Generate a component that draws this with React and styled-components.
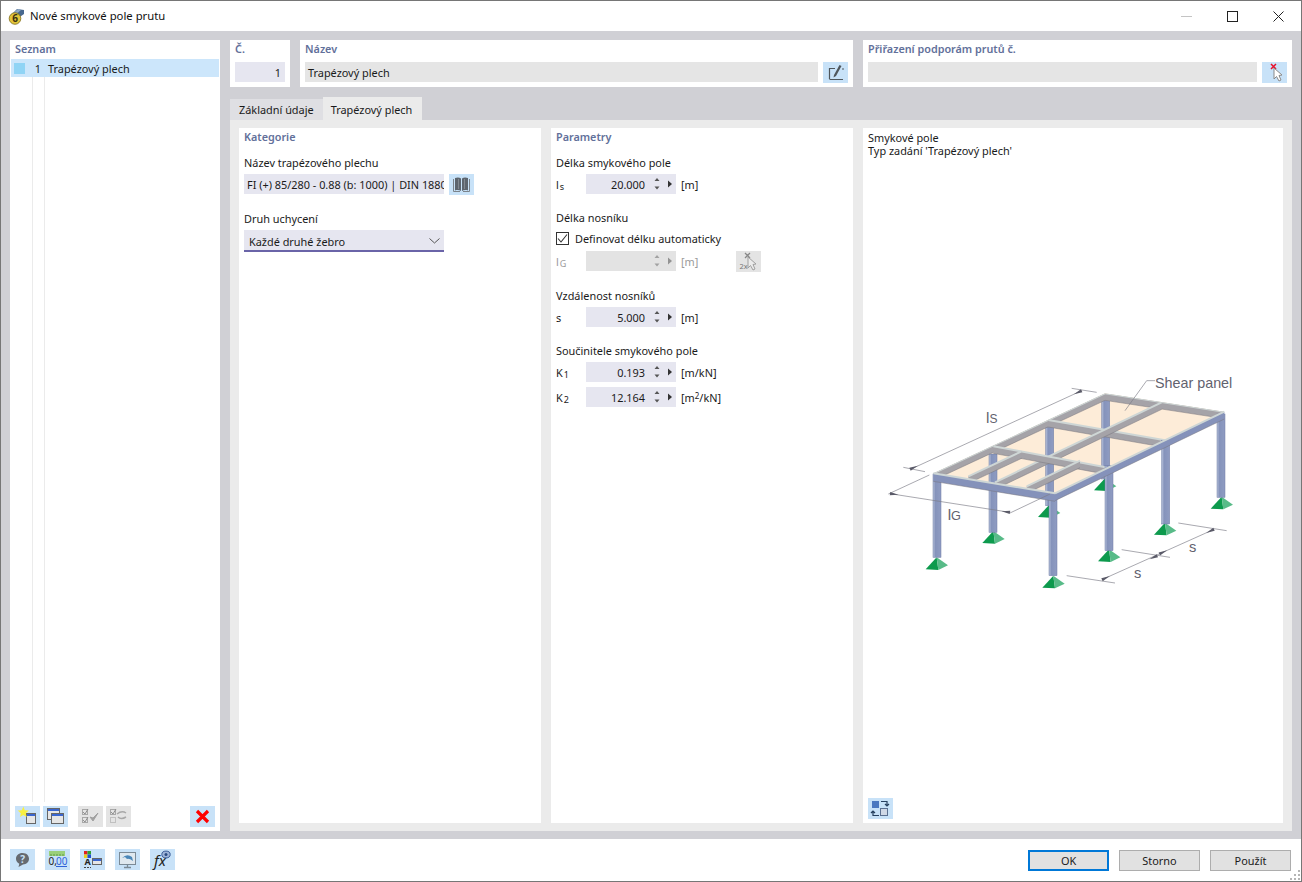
import React from "react";
import styled, { createGlobalStyle } from "styled-components";

const FONT = `"Noto Sans", "Open Sans", "Liberation Sans", sans-serif`;

const Spin = ({ disabled }) => (
  <SpinBox width="26" height="20" viewBox="0 0 26 20" $disabled={disabled}>
    <path d="M4.500 7 L7 4 L9.500 7 Z M4.500 12.500 L7 15.500 L9.500 12.500 Z" fill="#555" />
    <path d="M18 6.500 L22 10 L18 13.500 Z" fill="#333" />
  </SpinBox>
);

const NumberRow = ({ label, sub, value, unit, disabled, children }) => (
  <Row>
    <RowLabel $disabled={disabled}>
      {label}
      {sub && <Sub>{sub}</Sub>}
    </RowLabel>
    <NumberField $disabled={disabled}>
      <NumberValue>{value}</NumberValue>
      <Spin disabled={disabled} />
    </NumberField>
    <Unit $disabled={disabled}>{unit}</Unit>
    {children}
  </Row>
);

const Win = ({ x, y, w = 10, h = 10 }) => (
  <>
    <rect x={x + 0.5} y={y + 0.5} width={w} height={h} fill="#e6e6e6" stroke="#666" />
    <rect x={x + 1} y={y + 1} width={w - 1} height="2" fill="#3a66d0" />
  </>
);

const Ico = ({ children }) => (
  <svg width="25" height="21" viewBox="0 0 25 21">
    {children}
  </svg>
);

const NewIcon = () => (
  <Ico>
    <Win x={11} y={7} w={9} h={10} />
    <path d="M8.300 0.500 L9.800 4.200 L13.800 4.600 L10.800 7.200 L11.700 11 L8.300 9 L5 11 L5.800 7.200 L2.800 4.600 L6.800 4.200 Z" fill="#f8f040" />
  </Ico>
);

const CopyIcon = () => (
  <Ico>
    <Win x={4} y={2} w={12} h={11} />
    <Win x={8} y={7} w={12} h={10} />
  </Ico>
);

const CheckAllIcon = () => (
  <Ico>
    <rect x="4.500" y="3.500" width="5" height="5" fill="none" stroke="#a8a8a8" />
    <rect x="4.500" y="11.500" width="5" height="5" fill="none" stroke="#a8a8a8" />
    <path d="M5 6 L7 8 L10 3 M5 14 L7 16 L10 11" fill="none" stroke="#8f8f8f" />
    <path d="M12 11 L15 15 L20 7 L15 12 Z" fill="#a0a0a0" stroke="#a0a0a0" />
  </Ico>
);

const CheckSwapIcon = () => (
  <Ico>
    <rect x="4.500" y="3.500" width="5" height="5" fill="none" stroke="#a8a8a8" />
    <rect x="4.500" y="11.500" width="5" height="5" fill="none" stroke="#c0c0c0" />
    <path d="M5 6 L7 8 L10 3" fill="none" stroke="#8f8f8f" />
    <path d="M11 8 Q16 4 20 7 M20 11 Q15 14 12 11" fill="none" stroke="#a8a8a8" strokeWidth="1.500" />
  </Ico>
);

const DeleteIcon = () => (
  <Ico>
    <path d="M7 5 L18 16 M18 5 L7 16" stroke="#f00" strokeWidth="3.200" />
  </Ico>
);

const HelpIcon = () => (
  <Ico>
    <path d="M12.500 4 C17 4 19 7 19 9.800 C19 13 16.500 15.500 13 15.500 L8.500 18 L9.300 14.800 C7 13.500 6 12 6 9.800 C6 6.500 8.500 4 12.500 4 Z" fill="#666a70" />
    <IconText x="12.700" y="13.500" fontSize="10" fill="#c8e2f8" textAnchor="middle" fontWeight="700">?</IconText>
  </Ico>
);

const UnitsIcon = () => (
  <Ico>
    <rect x="4" y="2" width="16" height="5" fill="#9ad07a" />
    <path d="M6 5 V7 M9 5 V7 M12 5 V7 M15 5 V7 M18 5 V7" stroke="#5e9a48" />
    <IconText x="3.500" y="16" fontSize="10" fill="#222">0,</IconText>
    <IconText x="11" y="16" fontSize="10" fill="#2f62d8">00</IconText>
    <path d="M11 17.500 H22" stroke="#2f62d8" />
  </Ico>
);

const ColorIcon = () => (
  <Ico>
    <rect x="4" y="2" width="3.500" height="3.500" fill="#e02020" />
    <rect x="7.500" y="2" width="3.500" height="3.500" fill="#30a030" />
    <rect x="4" y="5.500" width="3.500" height="3.500" fill="#e8d020" />
    <rect x="7.500" y="5.500" width="3.500" height="3.500" fill="#2050d0" />
    <IconText x="4.500" y="16" fontSize="9" fontWeight="700" fill="#222">A</IconText>
    <path d="M4 18.500 H11" stroke="#444" strokeDasharray="2 1" />
    <Win x={12} y={9} w={9} h={6} />
  </Ico>
);

const ScreenIcon = () => (
  <Ico>
    <rect x="4.500" y="3.500" width="16" height="12" fill="#dfe8ef" stroke="#7b8a96" />
    <path d="M7 9 Q12 4 17 8 L18 12 Q14 9 12 10 L10 8 Z" fill="#4a86b8" />
    <path d="M12.500 15.500 V18 M9 18.500 H16" stroke="#7b8a96" strokeWidth="1.300" />
  </Ico>
);

const FormulaIcon = () => (
  <Ico>
    <IconText x="4" y="17" fontSize="15" fontStyle="italic" fontFamily='"Liberation Serif", serif' fill="#222">fx</IconText>
    <ellipse cx="16" cy="5.500" rx="4.200" ry="3.400" fill="#9db3d8" stroke="#3d5f9a" />
    <circle cx="16" cy="5.500" r="1.500" fill="#2a4a80" />
  </Ico>
);

const BookIcon = () => (
  <Ico>
    <path d="M6 4 C8 3.200 10.500 3.200 12 4.500 V17 C10.500 15.800 8 15.800 6 16.500 Z" fill="#5d656e" />
    <path d="M13 4.500 C14.500 3.200 17 3.200 19 4 V16.500 C17 15.800 14.500 15.800 13 17 Z" fill="#5d656e" />
    <path d="M4.500 5 V17.500 H11 M20.500 5 V17.500 H14" fill="none" stroke="#7c848c" />
    <path d="M9.500 5 V15 M15.500 5 V15" stroke="#8b939b" strokeWidth="0.800" />
  </Ico>
);

const EditIcon = () => (
  <Ico>
    <path d="M12 6.500 H6.500 V17 M6.500 17.500 H20" fill="none" stroke="#4f565c" strokeWidth="1.200" />
    <path d="M16.500 3 L18.500 4 L13 14 L10.500 15.500 L11 13 Z" fill="#4f565c" />
    <path d="M19 7 H21" stroke="#4f565c" />
  </Ico>
);

const PickXIcon = () => (
  <Ico>
    <path d="M9 2 L14 7 M14 2 L9 7" stroke="#e8102a" strokeWidth="1.500" />
    <path d="M12 6 L12 17 L14.500 14.500 L17 19 L19 18 L17 13.500 L20 13 Z" fill="#fff" stroke="#8a8a8a" />
  </Ico>
);

const PickDisabledIcon = () => (
  <Ico>
    <path d="M9 2 L14 7 M14 2 L9 7" stroke="#888" strokeWidth="1.300" />
    <IconText x="3.500" y="18" fontSize="7.500" fill="#777">2x</IconText>
    <path d="M12 6 L12 17 L14.500 14.500 L17 19 L19 18 L17 13.500 L20 13 Z" fill="#ececec" stroke="#a0a0a0" />
  </Ico>
);

const SwapIcon = () => (
  <Ico>
    <rect x="4" y="3" width="7" height="7" fill="#4a78c0" />
    <rect x="12.500" y="10.500" width="7" height="7" fill="#cfd8e6" stroke="#5a6f90" />
    <path d="M13 3.500 H19 V8 M17 6 L19 8 L21 6 M11 17.500 H5 V13 M3 15 L5 13 L7 15" fill="none" stroke="#26405f" strokeWidth="1.200" />
  </Ico>
);

// diagram, coordinates are 3x page pixels
const OUTLINE = "190,343 705,103 1063,158 555,403";
const backColumns = [
  [695, 125, 360],
  [527, 205, 440],
  [357, 285, 520],
];
const frontColumns = [
  [189, 345, 595],
  [875, 245, 495],
  [705, 320, 575],
  [1041, 165, 415],
  [537, 403, 650],
];
const supports = {
  back: [
    [705, 358],
    [537, 438],
    [370, 516],
  ],
  front: [
    [200, 595],
    [885, 491],
    [717, 571],
    [1055, 413],
    [550, 650],
  ],
};
const innerBeams = [
  [190, 343, 705, 103],
  [705, 103, 1063, 158],
  [535, 183, 885, 244],
  [875, 130, 375, 370],
  [370, 262, 715, 326],
  [455, 277, 295, 352],
  [630, 305, 470, 382],
];

const Support = ({ x, y }) => (
  <g>
    <path d={`M${x} ${y} L${x - 33} ${y + 36} L${x + 5} ${y + 38} Z`} fill="#0d9a4e" />
    <path d={`M${x} ${y} L${x + 5} ${y + 38} L${x + 34} ${y + 24} Z`} fill="#58bb88" />
  </g>
);

const SteelColumn = ({ x, top, bottom, w = 24 }) => (
  <rect x={x} y={top} width={w} height={bottom - top} fill="url(#col)" stroke="#6d7ba4" strokeWidth="1.500" />
);

const Beam = ({ x1, y1, x2, y2, t = 21, fill = "#a5a3a8", line = "#ced6d5" }) => (
  <g>
    <polygon points={`${x1},${y1} ${x2},${y2} ${x2},${y2 + t} ${x1},${y1 + t}`} fill={fill} />
    <line x1={x1} y1={y1} x2={x2} y2={y2} stroke={line} strokeWidth="6" />
    <line x1={x1} y1={y1 + t} x2={x2} y2={y2 + t} stroke="#77757c" strokeWidth="1.500" />
  </g>
);

const DimLine = ({ d }) => <path d={d} fill="none" stroke="#7d7d88" strokeWidth="2" />;

const Arrow = ({ x, y, angle }) => (
  <path d="M-26 0 L0 -5 L0 5 Z" fill="#5a5a68" transform={`translate(${x} ${y}) rotate(${angle})`} />
);

const ShearDiagram = () => (
  <Diagram width="380" height="240" viewBox="0 0 1140 720">
    <defs>
      <linearGradient id="col" x1="0" x2="1" y1="0" y2="0">
        <stop offset="0" stopColor="#b8c2db" />
        <stop offset="0.3" stopColor="#8593bb" />
        <stop offset="1" stopColor="#8f9cc2" />
      </linearGradient>
      <clipPath id="roof">
        <polygon points={OUTLINE} />
      </clipPath>
      <filter id="soft" x="-2%" y="-2%" width="104%" height="104%">
        <feGaussianBlur stdDeviation="1" />
      </filter>
    </defs>
    <g filter="url(#soft)">
      {supports.back.map(([x, y]) => (
        <Support key={x} x={x} y={y} />
      ))}
      <polygon points={OUTLINE} fill="#fdecd8" />
      {backColumns.map(([x, top, bottom]) => (
        <SteelColumn key={x} x={x} top={top} bottom={bottom} />
      ))}
      <g clipPath="url(#roof)">
        {innerBeams.map(([x1, y1, x2, y2]) => (
          <Beam key={`${x1}-${y1}`} x1={x1} y1={y1} x2={x2} y2={y2} />
        ))}
      </g>
      {supports.front.map(([x, y]) => (
        <Support key={x} x={x} y={y} />
      ))}
      {frontColumns.map(([x, top, bottom]) => (
        <SteelColumn key={x} x={x} top={top} bottom={bottom} />
      ))}
      <Beam x1={555} y1={403} x2={1063} y2={158} t={22} fill="#8592ba" />
      <Beam x1={190} y1={343} x2={555} y2={403} t={24} fill="#8592ba" />
      <DimLine d="M130 327 L635 95 M100 325 L165 338 M605 88 L680 100" />
      <DimLine d="M60 404 L420 460 M55 405 L178 348 M420 462 L540 405" />
      <DimLine d="M700 660 L1030 512 M590 650 L735 672 M755 572 L900 595 M925 492 L1070 515" />
      <DimLine d="M855 65 L830 65 L765 155" />
      <Arrow x={120} y={331} angle={155} />
      <Arrow x={635} y={95} angle={-25} />
      <Arrow x={60} y={404} angle={188} />
      <Arrow x={420} y={460} angle={8} />
      <Arrow x={696} y={662} angle={155} />
      <Arrow x={862} y={590} angle={-25} />
      <Arrow x={868} y={585} angle={155} />
      <Arrow x={1032} y={511} angle={-25} />
    </g>
    <DiagramText x="855" y="86" fontSize="43">Shear panel</DiagramText>
    <DiagramText x="348" y="193" fontSize="46">l<tspan fontSize="36">S</tspan></DiagramText>
    <DiagramText x="233" y="482" fontSize="46">l<tspan fontSize="38">G</tspan></DiagramText>
    <DiagramText x="792" y="658" fontSize="44">s</DiagramText>
    <DiagramText x="957" y="580" fontSize="44">s</DiagramText>
  </Diagram>
);

const App = () => {
  return (
    <>
      <GlobalStyle />
      <Window>
        <TitleBar>
          <svg width="18" height="18" viewBox="0 0 18 18">
            <path d="M2 9 L9 2 L16 3 L16 7 L6 14 Z" fill="#48688f" />
            <path d="M3 8 L10 2 L13 3 L6 9 Z" fill="#8fa9c4" />
            <circle cx="7" cy="11.500" r="5.800" fill="#e2c53a" stroke="#7c6a18" strokeWidth="0.800" />
            <TitleDigit x="7" y="15" textAnchor="middle">6</TitleDigit>
          </svg>
          <TitleText>Nové smykové pole prutu</TitleText>
          <WindowControls>
            <WinButton>
              <svg width="11" height="11" viewBox="0 0 11 11">
                <path d="M0 5.500 H11" stroke="#c4c4c4" />
              </svg>
            </WinButton>
            <WinButton>
              <svg width="11" height="11" viewBox="0 0 11 11">
                <rect x="0.500" y="0.500" width="10" height="10" fill="none" stroke="#222" />
              </svg>
            </WinButton>
            <WinButton>
              <svg width="11" height="11" viewBox="0 0 11 11">
                <path d="M0.500 0.500 L10.500 10.500 M10.500 0.500 L0.500 10.500" stroke="#222" />
              </svg>
            </WinButton>
          </WindowControls>
        </TitleBar>

        <Band>
          <ListPanel>
            <PanelTitle>Seznam</PanelTitle>
            <ListRow>
              <Swatch />
              <ListNumber>1</ListNumber>
              <ListName>Trapézový plech</ListName>
            </ListRow>
            <ListGuides>
              <Guide />
              <Guide />
            </ListGuides>
            <ListToolbar>
              <IconButton><NewIcon /></IconButton>
              <IconButton><CopyIcon /></IconButton>
              <IconButton $disabled $gapLeft><CheckAllIcon /></IconButton>
              <IconButton $disabled><CheckSwapIcon /></IconButton>
              <IconButton $push><DeleteIcon /></IconButton>
            </ListToolbar>
          </ListPanel>

          <MainArea>
            <TopRow>
              <NumberBox>
                <PanelTitle>Č.</PanelTitle>
                <IdField>1</IdField>
              </NumberBox>
              <HeadBox>
                <PanelTitle>Název</PanelTitle>
                <FieldLine>
                  <ReadField>Trapézový plech</ReadField>
                  <IconButton><EditIcon /></IconButton>
                </FieldLine>
              </HeadBox>
              <AssignBox>
                <PanelTitle>Přiřazení podporám prutů č.</PanelTitle>
                <FieldLine>
                  <ReadField />
                  <IconButton><PickXIcon /></IconButton>
                </FieldLine>
              </AssignBox>
            </TopRow>

            <Tabs>
              <Tab>Základní údaje</Tab>
              <Tab $active>Trapézový plech</Tab>
            </Tabs>

            <TabBody>
              <Column1>
                <SectionTitle>Kategorie</SectionTitle>
                <FieldLabel>Název trapézového plechu</FieldLabel>
                <Line>
                  <TextField>FI (+) 85/280 - 0.88 (b: 1000) | DIN 18807</TextField>
                  <IconButton><BookIcon /></IconButton>
                </Line>
                <FieldLabel $next={16}>Druh uchycení</FieldLabel>
                <SelectField>
                  Každé druhé žebro
                  <svg width="11" height="6" viewBox="0 0 11 6">
                    <path d="M0.500 0.500 L5.500 5 L10.500 0.500" fill="none" stroke="#555" />
                  </svg>
                </SelectField>
              </Column1>

              <Column2>
                <SectionTitle>Parametry</SectionTitle>
                <FieldLabel>Délka smykového pole</FieldLabel>
                <NumberRow label="l" sub="s" value="20.000" unit="[m]" />
                <FieldLabel $next={16}>Délka nosníku</FieldLabel>
                <CheckLine>
                  <CheckBox>
                    <svg width="11" height="11" viewBox="0 0 11 11">
                      <path d="M1 5.500 L4 9 L10 1.500" fill="none" stroke="#333" strokeWidth="1.100" />
                    </svg>
                  </CheckBox>
                  Definovat délku automaticky
                </CheckLine>
                <NumberRow label="l" sub="G" unit="[m]" disabled>
                  <IconButton $disabled $offset><PickDisabledIcon /></IconButton>
                </NumberRow>
                <FieldLabel $next={17}>Vzdálenost nosníků</FieldLabel>
                <NumberRow label="s" value="5.000" unit="[m]" />
                <FieldLabel $next={16}>Součinitele smykového pole</FieldLabel>
                <NumberRow label="K" sub="1" value="0.193" unit="[m/kN]" />
                <Spacer />
                <NumberRow
                  label="K"
                  sub="2"
                  value="12.164"
                  unit={
                    <>
                      [m<Sup>2</Sup>/kN]
                    </>
                  }
                />
              </Column2>

              <Column3>
                <PlainText>Smykové pole</PlainText>
                <PlainText>Typ zadání 'Trapézový plech'</PlainText>
                <ShearDiagram />
                <BottomButton>
                  <IconButton><SwapIcon /></IconButton>
                </BottomButton>
              </Column3>
            </TabBody>
          </MainArea>
        </Band>

        <Footer>
          <IconButton><HelpIcon /></IconButton>
          <IconButton><UnitsIcon /></IconButton>
          <IconButton><ColorIcon /></IconButton>
          <IconButton><ScreenIcon /></IconButton>
          <IconButton><FormulaIcon /></IconButton>
          <DialogButtons>
            <DialogButton $primary>OK</DialogButton>
            <DialogButton>Storno</DialogButton>
            <DialogButton>Použít</DialogButton>
          </DialogButtons>
          <Grip width="12" height="12" viewBox="0 0 12 12">
            <path d="M9 1h2v2H9z M5 5h2v2H5z M9 5h2v2H9z M1 9h2v2H1z M5 9h2v2H5z M9 9h2v2H9z" fill="#b5b5b5" />
          </Grip>
        </Footer>
      </Window>
    </>
  );
};

export default App;

const GlobalStyle = createGlobalStyle`
  html, body {
    margin: 0;
    padding: 0;
    background: #fff;
  }
  body {
    font-family: ${FONT};
    font-size: 10.900px;
    color: #1a1a1a;
  }
  * {
    box-sizing: border-box;
  }
`;

const Window = styled.div`
  position: relative;
  width: 1302px;
  height: 882px;
  display: flex;
  flex-direction: column;
  border: 1px solid #767676;
  background: #fff;
  overflow: hidden;
`;

const TitleBar = styled.div`
  height: 30px;
  flex: none;
  display: flex;
  align-items: center;
  padding-left: 7px;
  gap: 4px;
`;

const TitleDigit = styled.text`
  font-family: ${FONT};
  font-size: 10px;
  font-weight: 700;
  fill: #3a3010;
`;

const TitleText = styled.span`
  font-size: 11.300px;
  color: #111;
  margin-top: -2px;
`;

const WindowControls = styled.div`
  margin-left: auto;
  display: flex;
`;

const WinButton = styled.div`
  width: 46px;
  height: 30px;
  display: flex;
  align-items: center;
  justify-content: center;
`;

const Band = styled.div`
  flex: 1;
  min-height: 0;
  display: flex;
  gap: 10px;
  padding: 9px 9px 8px 9px;
  background: #d0d0d5;
`;

const ListPanel = styled.div`
  width: 210px;
  flex: none;
  display: flex;
  flex-direction: column;
  background: #fff;
  padding: 1px;
`;

const PanelTitle = styled.div`
  font-size: 10.800px;
  font-weight: 600;
  color: #62709a;
  line-height: 16px;
  padding: 0 0 0 4px;
`;

const ListRow = styled.div`
  height: 18px;
  margin-top: 2px;
  display: flex;
  align-items: center;
  background: #cce6fb;
`;

const Swatch = styled.div`
  width: 11px;
  height: 11px;
  margin-left: 3px;
  background: #90d4f5;
`;

const ListNumber = styled.span`
  width: 16px;
  text-align: right;
`;

const ListName = styled.span`
  margin-left: 7px;
`;

const ListGuides = styled.div`
  flex: 1;
  display: flex;
  gap: 11px;
  padding-left: 21px;
`;

const Guide = styled.div`
  width: 1px;
  background: #ebebeb;
`;

const ListToolbar = styled.div`
  display: flex;
  gap: 3px;
  padding: 4px 4px 3px 4px;
`;

const IconButton = styled.div`
  width: 25px;
  height: 21px;
  flex: none;
  background: ${(p) => (p.$disabled ? "#e4e4e4" : "#c8e2f8")};
  margin-left: ${(p) => (p.$push ? "auto" : p.$gapLeft ? "7px" : p.$offset ? "38px" : "0")};

  svg {
    display: block;
  }
`;

const MainArea = styled.div`
  flex: 1;
  min-width: 0;
  display: flex;
  flex-direction: column;
`;

const TopRow = styled.div`
  display: flex;
  gap: 10px;
  height: 47px;
  flex: none;
`;

const HeadCard = styled.div`
  background: #fff;
  padding: 1px 5px 0;

  ${PanelTitle} {
    padding-left: 0;
    height: 21px;
  }
`;

const NumberBox = styled(HeadCard)`
  width: 60px;
`;

const HeadBox = styled(HeadCard)`
  width: 553px;
`;

const AssignBox = styled(HeadCard)`
  flex: 1;
`;

const IdField = styled.div`
  height: 20px;
  line-height: 22px;
  background: #e6e6f0;
  text-align: right;
  padding-right: 4px;
`;

const FieldLine = styled.div`
  display: flex;
  gap: 5px;
`;

const ReadField = styled.div`
  flex: 1;
  height: 20px;
  line-height: 22px;
  background: #e5e5e5;
  padding-left: 3px;
`;

const Tabs = styled.div`
  height: 23px;
  margin-top: 10px;
  flex: none;
  display: flex;
  align-items: flex-end;
`;

const Tab = styled.div`
  height: ${(p) => (p.$active ? "23px" : "21px")};
  line-height: ${(p) => (p.$active ? "25px" : "22px")};
  padding: ${(p) => (p.$active ? "0 10px 0 8px" : "0 9px")};
  background: ${(p) => (p.$active ? "#ebebeb" : "#dfdfe3")};
`;

const TabBody = styled.div`
  flex: 1;
  min-height: 0;
  display: flex;
  gap: 10px;
  padding: 8px 9px;
  background: #ebebeb;
`;

const WhiteColumn = styled.div`
  background: #fff;
  display: flex;
  flex-direction: column;
`;

const Column1 = styled(WhiteColumn)`
  width: 302px;
  padding: 1px 5px;
`;

const Column2 = styled(WhiteColumn)`
  width: 302px;
  padding: 1px 5px;
`;

const Column3 = styled(WhiteColumn)`
  flex: 1;
  min-width: 0;
  padding: 3px 5px 4px;
`;

const SectionTitle = styled.div`
  font-size: 10.800px;
  font-weight: 600;
  color: #62709a;
  line-height: 16px;
`;

const FieldLabel = styled.div`
  line-height: 16px;
  margin-top: ${(p) => p.$next ?? 10}px;
  margin-bottom: 3px;
`;

const Line = styled.div`
  display: flex;
  gap: 5px;
`;

const TextField = styled.div`
  width: 200px;
  height: 20px;
  line-height: 22px;
  background: #e6e6f0;
  padding-left: 3px;
  white-space: nowrap;
  overflow: hidden;
`;

const SelectField = styled.div`
  width: 200px;
  height: 22px;
  display: flex;
  align-items: center;
  justify-content: space-between;
  padding: 2px 4px 0 5px;
  background: #e6e6f0;
  border-bottom: 2px solid #6a64a8;
`;

const Row = styled.div`
  display: flex;
  align-items: center;
  height: 20px;
`;

const RowLabel = styled.div`
  width: 30px;
  color: ${(p) => (p.$disabled ? "#9a9a9a" : "inherit")};
`;

const Sub = styled.span`
  font-size: 9px;
  position: relative;
  top: 1px;
  margin-left: 1px;
`;

const Sup = styled.span`
  font-size: 8px;
  position: relative;
  top: -3px;
`;

const NumberField = styled.div`
  width: 90px;
  height: 20px;
  display: flex;
  align-items: center;
  justify-content: flex-end;
  background: ${(p) => (p.$disabled ? "#e3e3e3" : "#e6e6f0")};
`;

const NumberValue = styled.span`
  margin-right: 5px;
`;

const SpinBox = styled.svg`
  flex: none;
  opacity: ${(p) => (p.$disabled ? 0.45 : 1)};
`;

const Unit = styled.span`
  margin-left: 5px;
  color: ${(p) => (p.$disabled ? "#9a9a9a" : "inherit")};
`;

const CheckLine = styled.div`
  display: flex;
  align-items: center;
  height: 16px;
  margin: 1px 0 5px;
  gap: 6px;
`;

const CheckBox = styled.div`
  width: 13px;
  height: 13px;
  border: 1px solid #333;
  display: flex;
  align-items: center;
  justify-content: center;
`;

const Spacer = styled.div`
  height: 5px;
  flex: none;
`;

const PlainText = styled.div`
  line-height: 13px;
`;

const Diagram = styled.svg`
  display: block;
  margin: 202px 0 0 2px;
`;

const DiagramText = styled.text`
  font-family: "Liberation Sans", Arial, sans-serif;
  fill: #62626e;
`;

const IconText = styled.text`
  font-family: ${FONT};
`;

const BottomButton = styled.div`
  margin-top: auto;
`;

const Footer = styled.div`
  height: 42px;
  flex: none;
  display: flex;
  align-items: center;
  gap: 10px;
  padding: 0 10px 1px 9px;
  background: #fff;
`;

const DialogButtons = styled.div`
  margin: 2px 0 0 auto;
  display: flex;
  gap: 10px;
`;

const DialogButton = styled.div`
  width: 81px;
  height: 21px;
  line-height: ${(p) => (p.$primary ? "18px" : "20px")};
  text-align: center;
  background: #e1e1e1;
  border: ${(p) => (p.$primary ? "2px solid #0078d7" : "1px solid #adadad")};
`;

const Grip = styled.svg`
  position: absolute;
  right: 0;
  bottom: 0;
`;
